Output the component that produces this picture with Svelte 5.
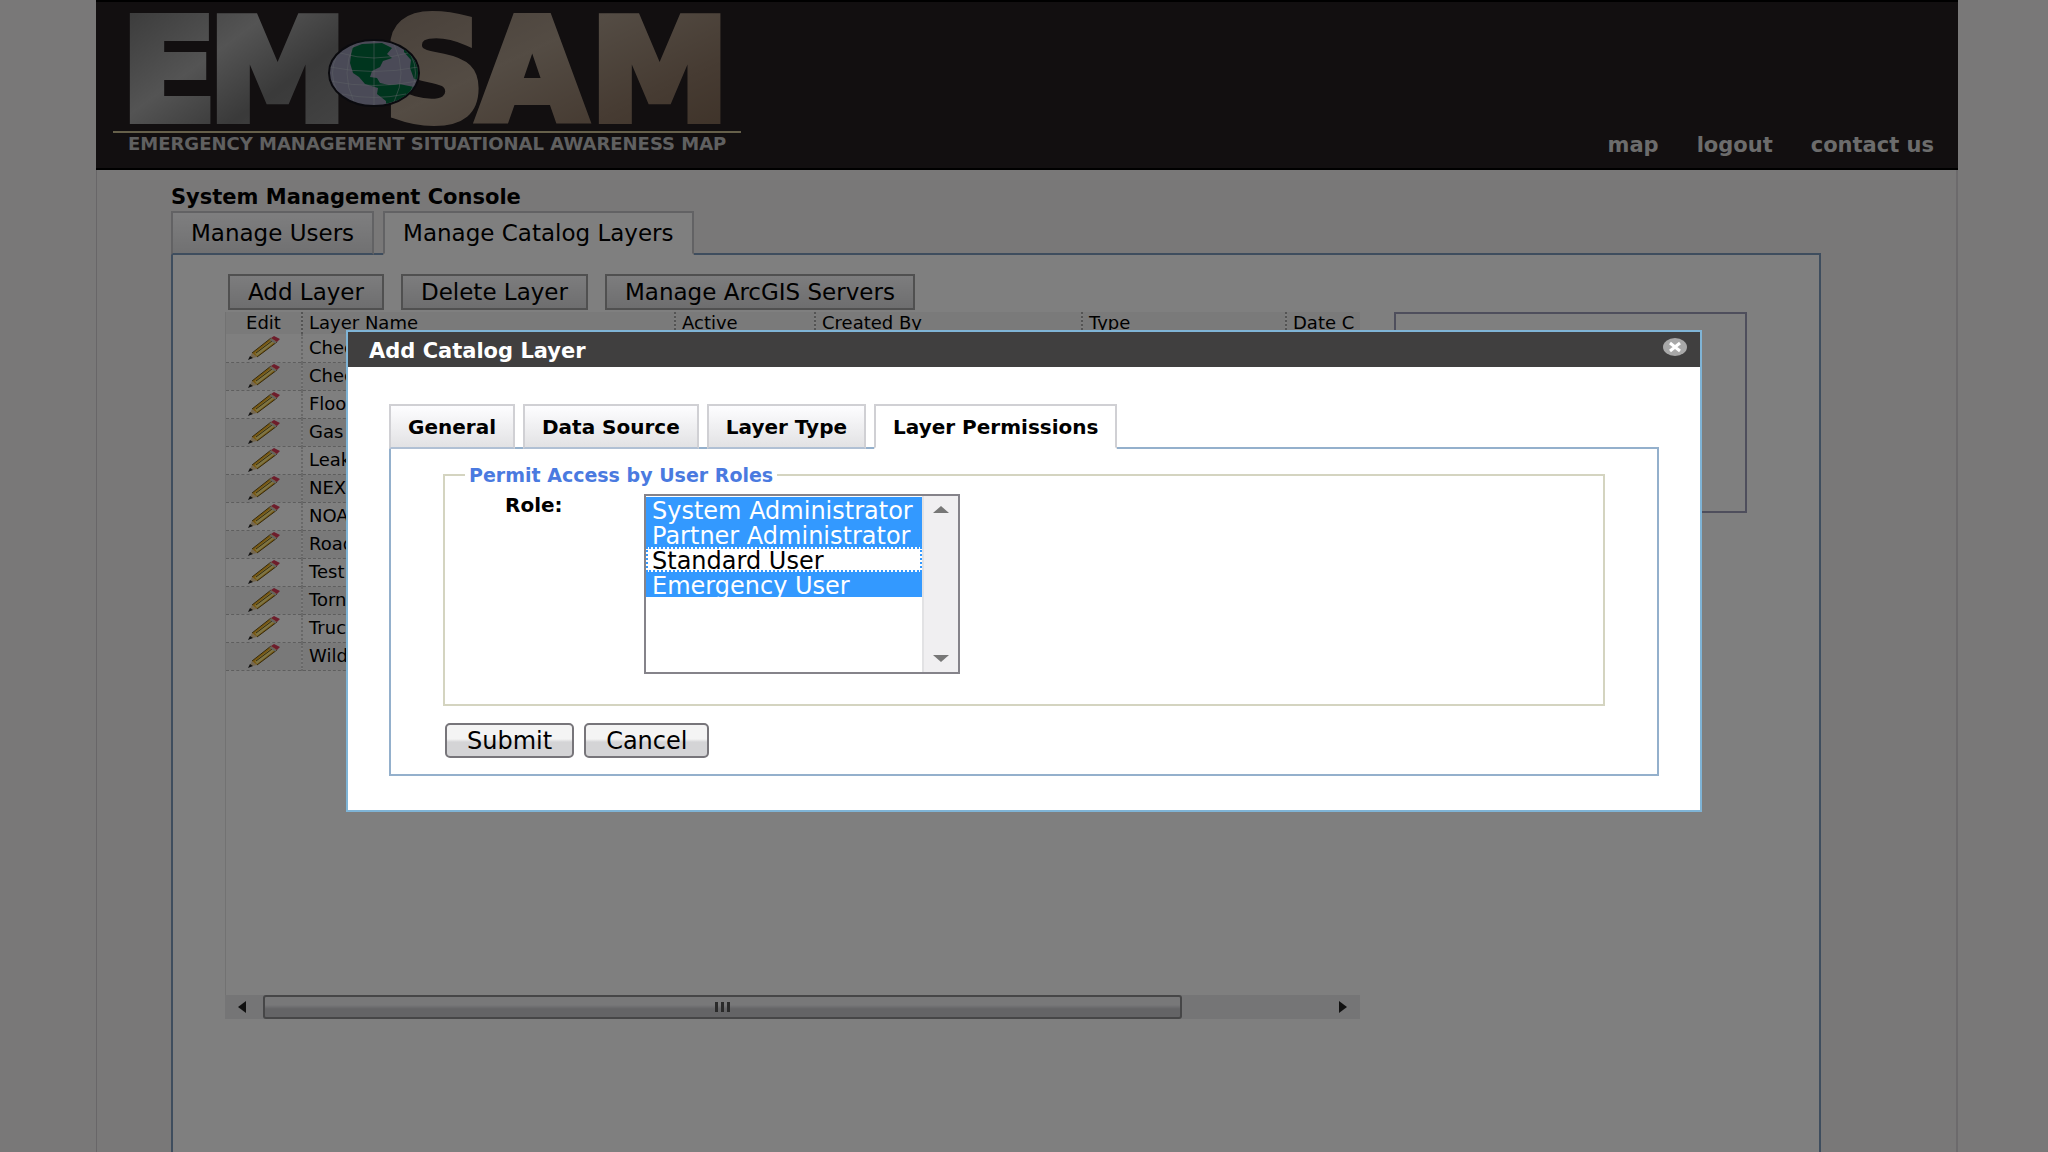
<script lang="ts">
	const menu = ['map', 'logout', 'contact us'];
	const mainTabs = ['Manage Users', 'Manage Catalog Layers'];
	const actions = ['Add Layer', 'Delete Layer', 'Manage ArcGIS Servers'];
	const columns = ['Edit', 'Layer Name', 'Active', 'Created By', 'Type', 'Date C'];
	const layers = [
		'Check',
		'Check',
		'Flood',
		'Gas',
		'Leaks',
		'NEXRAD',
		'NOAA',
		'Roads',
		'Test',
		'Tornado',
		'Truck',
		'Wildfire'
	];
	const dialogTabs = ['General', 'Data Source', 'Layer Type', 'Layer Permissions'];
	const roles = [
		'System Administrator',
		'Partner Administrator',
		'Standard User',
		'Emergency User'
	];

	let activeMain = $state('Manage Catalog Layers');
	let activeDialog = $state('Layer Permissions');
	let selectedRoles = $state(['System Administrator', 'Partner Administrator', 'Emergency User']);
	let open = $state(true);
</script>

<div class="page">
	<header>
		<svg class="logo" width="660" height="160" viewBox="0 0 660 160" role="img" aria-label="EM SAM">
			<defs>
				<linearGradient id="steel" x1="0" y1="0" x2="1" y2="1">
					<stop offset="0" stop-color="#6c6c6c" />
					<stop offset="0.4" stop-color="#a8a8a8" />
					<stop offset="0.65" stop-color="#747474" />
					<stop offset="1" stop-color="#8e8e8e" />
				</linearGradient>
				<linearGradient id="bronze" x1="0" y1="0" x2="1" y2="1">
					<stop offset="0" stop-color="#8c7c70" />
					<stop offset="0.4" stop-color="#a89888" />
					<stop offset="0.7" stop-color="#8e7866" />
					<stop offset="1" stop-color="#78604c" />
				</linearGradient>
				<clipPath id="globe">
					<ellipse cx="278" cy="71" rx="44" ry="32" />
				</clipPath>
			</defs>
			<g class="letters">
				<text x="25 112" y="118" fill="url(#steel)" stroke="url(#steel)">EM</text>
				<text x="288 382 494" y="118" fill="url(#bronze)" stroke="url(#bronze)">SAM</text>
			</g>
			<ellipse cx="278" cy="71" rx="45" ry="33" fill="#9494ae" stroke="#14141c" stroke-width="2" />
			<g clip-path="url(#globe)">
				<path
					d="M256 46l10-4 20-1 10 5-5 6 5 4-9 3-3 6-8 4-2 6 7 1 3 5 9 2 10-1 20 4-6 10-13 5-6 8-8 0v-10l-9-7 1-6-13-4-6-7-6-4-3-10z"
					fill="#006a3c"
				/>
				<path d="M308 46l10 8 4 10 1 14-5-1-4-11 1-8-7-8z" fill="#006a3c" />
				<path
					d="M278 38v66M258 42q-14 29 0 58M298 42q14 29 0 58M244 51q34 10 68 0M234 65q44 9 88 0M234 79q44 9 88 0M246 92q32 7 64 0M241 53q-9 18 0 36M315 53q9 18 0 36"
					fill="none"
					stroke="#bcc4cc"
					stroke-opacity="0.5"
				/>
			</g>
			<path d="M17 130h628" stroke="#ccc094" stroke-width="2" />
			<text class="tagline" x="32" y="148">EMERGENCY MANAGEMENT SITUATIONAL AWARENESS MAP</text>
		</svg>
		<nav>
			{#each menu as item}
				<a href="#{item.replace(' ', '-')}">{item}</a>
			{/each}
		</nav>
	</header>

	<main>
		<h1>System Management Console</h1>
		<div class="tabs main-tabs">
			{#each mainTabs as tab}
				<button class:active={activeMain === tab} onclick={() => (activeMain = tab)}>{tab}</button>
			{/each}
		</div>

		<section class="panel">
			<div class="catalog">
				<div class="actions">
					{#each actions as action}
						<button>{action}</button>
					{/each}
				</div>
				<div class="grid">
					<table>
						<colgroup>
							<col class="c-edit" />
							<col class="c-name" />
							<col class="c-active" />
							<col class="c-by" />
							<col class="c-type" />
							<col />
						</colgroup>
						<thead>
							<tr>
								{#each columns as column}
									<th>{column}</th>
								{/each}
							</tr>
						</thead>
						<tbody>
							{#each layers as layer}
								<tr>
									<td>
										<svg width="34" height="26" viewBox="0 0 34 26" aria-hidden="true">
											<path d="M2 24l3-6 5 4z" fill="#e8cfa0" />
											<path d="M1 25l2-4 3 2z" fill="#222" />
											<path d="M5 18L24 3l6 4L10 22z" fill="#f2b021" />
											<path d="M8 18L26 4l3 2L10 21z" fill="#fbe98a" />
											<path d="M5 18L24 3M10 22L30 7M9 18L25 6" stroke="#6a5418" fill="none" />
											<path d="M24 3l3-2 6 3-3 3z" fill="#dc3a58" />
											<path d="M23 4l6 4" stroke="#c4c4c4" stroke-width="2" />
										</svg>
									</td>
									<td>{layer}</td>
									<td></td>
									<td></td>
									<td></td>
									<td></td>
								</tr>
							{/each}
						</tbody>
					</table>
				</div>
				<div class="scrollbar">
					<svg width="38" height="24" viewBox="0 0 38 24" aria-hidden="true">
						<path d="M13 12l8-6v12z" fill="#222" />
					</svg>
					<div class="thumb"><i></i><i></i><i></i></div>
					<svg width="38" height="24" viewBox="0 0 38 24" aria-hidden="true">
						<path d="M25 12l-8-6v12z" fill="#222" />
					</svg>
				</div>
			</div>
			<aside></aside>
		</section>
	</main>
</div>

{#if open}
	<div class="overlay">
		<div class="dialog" role="dialog" aria-modal="true" aria-labelledby="dialog-title">
			<div class="titlebar">
				<h2 id="dialog-title">Add Catalog Layer</h2>
				<button class="close" aria-label="Close" onclick={() => (open = false)}>
					<svg width="26" height="20" viewBox="0 0 26 20" aria-hidden="true">
						<ellipse cx="13" cy="10" rx="12" ry="9" fill="#a8a8a8" />
						<path d="M8 6l10 8M18 6L8 14" stroke="#fff" stroke-width="3" />
					</svg>
				</button>
			</div>
			<div class="dialog-body">
				<div class="tabs dialog-tabs">
					{#each dialogTabs as tab}
						<button class:active={activeDialog === tab} onclick={() => (activeDialog = tab)}>
							{tab}
						</button>
					{/each}
				</div>
				<form class="permissions" onsubmit={(e) => e.preventDefault()}>
					<fieldset>
						<legend>Permit Access by User Roles</legend>
						<div class="field">
							<label for="role">Role:</label>
							<div class="listbox">
								<select id="role" multiple size="7" bind:value={selectedRoles}>
									{#each roles as role}
										<option value={role}>{role}</option>
									{/each}
								</select>
								<div class="track">
									<svg width="16" height="7" viewBox="0 0 16 7" aria-hidden="true">
										<path d="M8 0l8 7H0z" fill="#777" />
									</svg>
									<svg width="16" height="7" viewBox="0 0 16 7" aria-hidden="true">
										<path d="M8 7l8-7H0z" fill="#777" />
									</svg>
								</div>
							</div>
						</div>
					</fieldset>
					<div class="buttons">
						<button type="submit">Submit</button>
						<button type="button" onclick={() => (open = false)}>Cancel</button>
					</div>
				</form>
			</div>
		</div>
	</div>
{/if}

<style>
	:global(body) {
		background-color: #f3f0f0;
		overflow: hidden;
	}

	.page,
	.overlay,
	button,
	select {
		font-family: 'DejaVu Sans', Verdana, sans-serif;
		font-size: 20px;
	}

	.page {
		display: flex;
		flex-direction: column;
		height: 100vh;
		margin: 0 90px 0 96px;
		box-sizing: border-box;
		overflow: hidden;
		color: #000;
	}

	header {
		display: flex;
		justify-content: space-between;
		align-items: flex-end;
		height: 170px;
		flex: none;
		box-sizing: border-box;
		border-top: 2px solid #000;
		border-bottom: 2px solid #000;
		background-color: #241e20;
	}

	.logo {
		align-self: flex-start;
	}

	.letters {
		font-size: 140px;
		font-weight: bold;
		stroke-width: 8;
	}

	.tagline {
		font-size: 18px;
		font-weight: bold;
		fill: #c0c0c0;
	}

	nav {
		display: flex;
		gap: 38px;
		padding: 0 24px 9px 0;
	}

	nav a {
		color: #d8d8d8;
		font-size: 21px;
		font-weight: bold;
		line-height: 28px;
		text-decoration: none;
	}

	main {
		display: flex;
		flex-direction: column;
		flex: 1;
		padding: 14px 135px 0 74px;
		border-left: 1px solid #d0cdd0;
		border-right: 2px solid #d8d5d8;
	}

	h1 {
		margin: 0;
		font-size: 21px;
		line-height: 27px;
	}

	.tabs {
		display: flex;
		gap: 9px;
		position: relative;
		z-index: 1;
		margin-bottom: -2px;
	}

	.tabs button {
		height: 44px;
		padding: 0 18px;
		border: 2px solid #d0d0d4;
		background: linear-gradient(#fdfdff, #e2e2e4);
		color: #000;
		white-space: nowrap;
		border-bottom-color: #b0c0d4;
	}

	.tabs button.active {
		background: #fff;
		border-bottom-color: #fff;
	}

	.main-tabs button {
		border-color: #c4c4c8;
		border-bottom-color: #7d9bbd;
		font-size: 23px;
	}

	.panel {
		display: flex;
		align-items: flex-start;
		gap: 34px;
		flex: 1;
		padding: 19px 72px 0 52px;
		border: 2px solid #7d9bbd;
		border-bottom: 0;
		background-color: #fff;
	}

	.catalog {
		flex: 1138;
		min-width: 0;
	}

	.actions {
		display: flex;
		gap: 17px;
		padding: 0 3px 2px;
	}

	.actions button {
		height: 36px;
		padding: 0 18px;
		border: 2px solid #a0a0a0;
		background: linear-gradient(#fafafc, #dcdcde);
		color: #000;
		font-size: 23px;
		line-height: 30px;
		white-space: nowrap;
	}

	.grid {
		height: 683px;
		overflow: hidden;
		border-left: 1px solid #e4e4e4;
	}

	table {
		width: 100%;
		table-layout: fixed;
		border-collapse: collapse;
		font-size: 18px;
	}

	.c-edit {
		width: 76px;
	}

	.c-name {
		width: 373px;
	}

	.c-active {
		width: 140px;
	}

	.c-by {
		width: 267px;
	}

	.c-type {
		width: 204px;
	}

	th,
	td {
		box-sizing: border-box;
		height: 28px;
		padding: 0 0 0 6px;
		line-height: 20px;
		text-align: left;
		border-right: 2px dotted #a8a8a8;
		white-space: nowrap;
		overflow: hidden;
	}

	th {
		height: 22px;
		font-weight: normal;
		background-color: #f4f4f4;
	}

	td {
		border-right-color: #d0d0d0;
		border-bottom: 1px dashed #bcbcbc;
	}

	tbody tr:nth-child(even) {
		background-color: #f2f2f2;
	}

	th:first-child,
	td:first-child {
		padding: 0;
		text-align: center;
	}

	th:last-child,
	td:last-child {
		border-right: 0;
	}

	td svg {
		display: block;
		margin: 0 auto;
	}

	.scrollbar {
		display: flex;
		height: 24px;
		background-color: #ebebed;
	}

	.thumb {
		display: flex;
		justify-content: center;
		align-items: center;
		gap: 3px;
		width: 81%;
		box-sizing: border-box;
		border: 2px solid #8c8c8e;
		border-radius: 3px;
		background: linear-gradient(#f0f0f2 40%, #c8c8cc 60%);
	}

	.thumb i {
		width: 3px;
		height: 10px;
		background-color: #555;
	}

	.scrollbar svg:last-child {
		margin-left: auto;
	}

	aside {
		flex: 350;
		height: 201px;
		margin-top: 38px;
		box-sizing: border-box;
		border: 2px solid #9c9cb8;
	}

	.overlay {
		position: fixed;
		inset: 0;
		z-index: 2;
		padding: 330px 346px 0;
		background-color: rgba(0, 0, 0, 0.5);
	}

	.dialog {
		border: 2px solid #7fb4d6;
		background-color: #fff;
	}

	.titlebar {
		display: flex;
		justify-content: space-between;
		align-items: flex-start;
		height: 35px;
		padding: 0 12px 0 21px;
		background-color: #403f3f;
		color: #fff;
	}

	h2 {
		margin: 0;
		font-size: 21px;
		line-height: 38px;
	}

	.close {
		display: flex;
		padding: 5px 0;
		border: 0;
		background: none;
	}

	.dialog-body {
		padding: 37px 41px 34px;
	}

	.dialog-tabs {
		gap: 8px;
	}

	.dialog-tabs button {
		height: 45px;
		padding: 0 17px;
		font-size: 20px;
		font-weight: bold;
	}

	.permissions {
		padding: 15px 52px 16px;
		border: 2px solid #94b0cc;
	}

	fieldset {
		min-width: 0;
		margin: 0;
		padding: 0 60px 30px;
		border: 2px solid #d4d4c0;
	}

	legend {
		margin-left: -40px;
		padding: 0 4px;
		color: #4a7ae0;
		font-size: 19px;
		font-weight: bold;
		line-height: 22px;
	}

	.field {
		display: flex;
		padding-top: 8px;
	}

	label {
		width: 139px;
		font-size: 20px;
		font-weight: bold;
		line-height: 22px;
	}

	.listbox {
		display: flex;
		width: 316px;
		height: 180px;
		box-sizing: border-box;
		border: 2px solid #85838a;
	}

	select {
		flex: 1;
		min-width: 0;
		margin: 0;
		padding: 1px 0 0;
		border: 0;
		border-radius: 0;
		outline: 0;
		background-color: #fff;
		color: #000;
		font-size: 24px;
		overflow: hidden;
	}

	option {
		box-sizing: border-box;
		height: 25px;
		min-height: 25px;
		padding: 0 6px;
		line-height: 25px;
	}

	option:not(:checked) {
		outline: 2px dotted #3399ff;
		outline-offset: -2px;
	}

	option:checked {
		background: linear-gradient(#3399ff, #3399ff);
		-webkit-text-fill-color: #fff;
	}

	.track {
		display: flex;
		flex-direction: column;
		justify-content: space-between;
		align-items: center;
		width: 36px;
		padding: 10px 0;
		box-sizing: border-box;
		border-left: 2px solid #e2e2e4;
		background-color: #f0eff1;
	}

	.buttons {
		display: flex;
		gap: 10px;
		padding: 17px 2px 0;
	}

	.buttons button {
		height: 35px;
		padding: 0 20px;
		border: 2px solid #77757a;
		border-radius: 5px;
		background: linear-gradient(#f4f4f4 45%, #d4d4d6 55%);
		color: #000;
		font-size: 24px;
		line-height: 30px;
	}
</style>
